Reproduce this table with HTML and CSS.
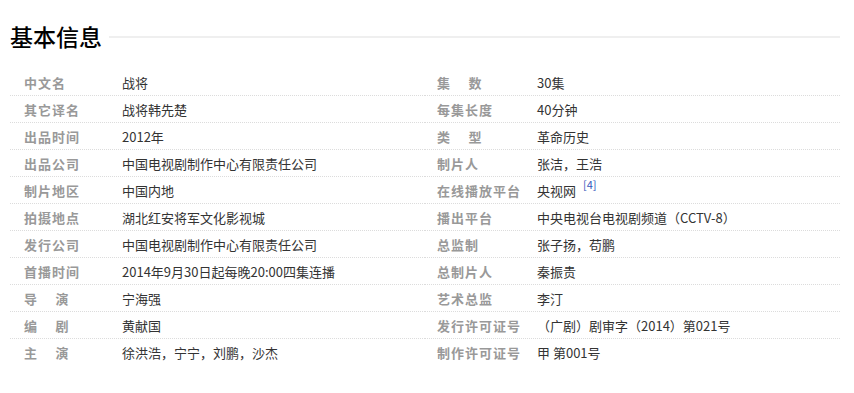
FILE: index.html
```html
<!DOCTYPE html>
<html lang="zh-CN">
<head>
<meta charset="utf-8">
<title>基本信息</title>
<link rel="stylesheet" href="styles.css">
</head>
<body>
<div class="page">
  <div class="title-bar">
    <h2 class="title">基本信息</h2>
    <div class="title-line"></div>
  </div>
  <div class="info">
    <dl class="col col-left">
      <div class="row"><dt>中文名</dt><dd>战将</dd></div>
      <div class="row"><dt>其它译名</dt><dd>战将韩先楚</dd></div>
      <div class="row"><dt>出品时间</dt><dd>2012年</dd></div>
      <div class="row"><dt>出品公司</dt><dd>中国电视剧制作中心有限责任公司</dd></div>
      <div class="row"><dt>制片地区</dt><dd>中国内地</dd></div>
      <div class="row"><dt>拍摄地点</dt><dd>湖北红安将军文化影视城</dd></div>
      <div class="row"><dt>发行公司</dt><dd>中国电视剧制作中心有限责任公司</dd></div>
      <div class="row"><dt>首播时间</dt><dd>2014年9月30日起每晚20:00四集连播</dd></div>
      <div class="row"><dt>导&emsp;&thinsp;演</dt><dd>宁海强</dd></div>
      <div class="row"><dt>编&emsp;&thinsp;剧</dt><dd>黄献国</dd></div>
      <div class="row last"><dt>主&emsp;&thinsp;演</dt><dd>徐洪浩，宁宁，刘鹏，沙杰</dd></div>
    </dl>
    <dl class="col col-right">
      <div class="row"><dt>集&emsp;&thinsp;数</dt><dd>30集</dd></div>
      <div class="row"><dt>每集长度</dt><dd>40分钟</dd></div>
      <div class="row"><dt>类&emsp;&thinsp;型</dt><dd>革命历史</dd></div>
      <div class="row"><dt>制片人</dt><dd>张洁，王浩</dd></div>
      <div class="row"><dt>在线播放平台</dt><dd>央视网<sup class="ref">[4]</sup></dd></div>
      <div class="row"><dt>播出平台</dt><dd>中央电视台电视剧频道（CCTV-8）</dd></div>
      <div class="row"><dt>总监制</dt><dd>张子扬，苟鹏</dd></div>
      <div class="row"><dt>总制片人</dt><dd>秦振贵</dd></div>
      <div class="row"><dt>艺术总监</dt><dd>李汀</dd></div>
      <div class="row"><dt>发行许可证号</dt><dd>（广剧）剧审字（2014）第021号</dd></div>
      <div class="row last"><dt>制作许可证号</dt><dd>甲 第001号</dd></div>
    </dl>
  </div>
</div>
</body>
</html>
```

FILE: styles.css
```css
html, body {
  margin: 0;
  padding: 0;
  background: #fff;
}

body {
  font-family: "Noto Sans CJK SC", "Noto Sans", sans-serif;
  color: #333;
}

.page {
  width: 830px;
  padding: 21px 10px 0 10px;
}

.title-bar {
  display: flex;
  align-items: center;
  height: 30px;
  margin-bottom: 18px;
}

.title {
  margin: 0;
  font-size: 23px;
  line-height: 30px;
  font-weight: 500;
  color: #000;
}

.title-line {
  flex: 1;
  height: 2px;
  margin-left: 7px;
  margin-top: 2px;
  background: #efefef;
}

.info {
  display: grid;
  grid-template-columns: 415px 415px;
}

.col {
  margin: 0;
}

.row {
  display: flex;
  height: 26px;
  align-items: center;
  border-bottom: 1px dotted #dcdcdc;
  font-size: 13px;
}

.row.last {
  border-bottom-color: transparent;
}

dt {
  width: 98px;
  padding-left: 14px;
  font-weight: 700;
  color: #999;
  letter-spacing: 1px;
  white-space: nowrap;
}

.col-right dt {
  padding-left: 12px;
  width: 100px;
}

dd {
  margin: 0;
  color: #333;
  white-space: nowrap;
}

.ref {
  font-size: 11px;
  color: #3355bb;
  margin-left: 7px;
  position: relative;
  top: -2px;
  vertical-align: top;
  line-height: 1;
}
```
